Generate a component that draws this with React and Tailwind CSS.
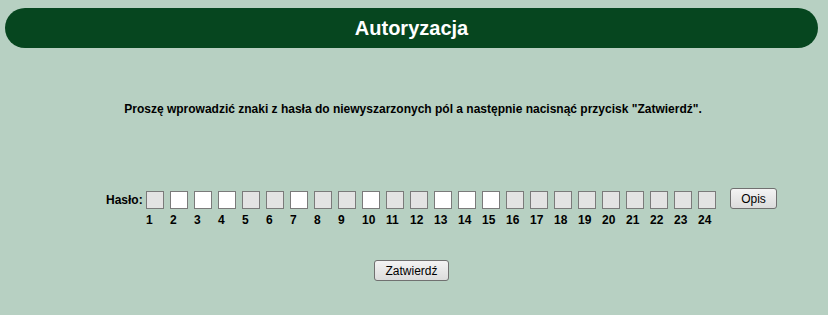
import React from "react";

const white = new Set([2, 3, 4, 7, 10, 13, 14, 15]);

export default function App() {
  const nums = Array.from({ length: 24 }, (_, i) => i + 1);
  return (
    <div className="w-[828px] h-[315px] bg-[#b7d0c2] font-['Liberation_Sans',Arial,sans-serif] pt-[8px] overflow-hidden">
      <div className="ml-[5px] w-[813px] h-[40px] rounded-full bg-[#06461f] flex items-center justify-center text-white text-[20px] font-bold">
        Autoryzacja
      </div>
      <p className="mt-[54px] text-center text-[12px] leading-[14px] font-bold text-black pr-[2px]">
        Proszę wprowadzić znaki z hasła do niewyszarzonych pól a następnie nacisnąć przycisk "Zatwierdź".
      </p>
      <div className="mt-[72px] flex items-start pl-[106px]">
        <div className="mt-[3px] w-[40px] h-[18px] flex items-center text-[12px] font-bold text-black whitespace-nowrap">Hasło:</div>
        <div className="flex gap-[6px] mt-[3px]">
          {nums.map((n) => (
            <div key={n} className="flex flex-col w-[18px]">
              <div
                className={
                  "w-[18px] h-[18px] border border-[#7a7a7a] " +
                  (white.has(n) ? "bg-white" : "bg-[#e3e3e3]")
                }
              />
              <div className="mt-[4px] text-[12px] leading-[14px] font-bold text-black whitespace-nowrap">{n}</div>
            </div>
          ))}
        </div>
        <button className="ml-[14px] w-[47px] h-[21px] rounded-[3px] border border-[#707070] bg-gradient-to-b from-[#f3f3f3] to-[#dcdcdc] text-[12px] text-black flex items-center justify-center">
          Opis
        </button>
      </div>
      <div className="mt-[33px] flex pl-[374px]">
        <button className="w-[75px] h-[21px] rounded-[3px] border border-[#707070] bg-gradient-to-b from-[#f3f3f3] to-[#dcdcdc] text-[12px] text-black flex items-center justify-center">
          Zatwierdź
        </button>
      </div>
    </div>
  );
}
